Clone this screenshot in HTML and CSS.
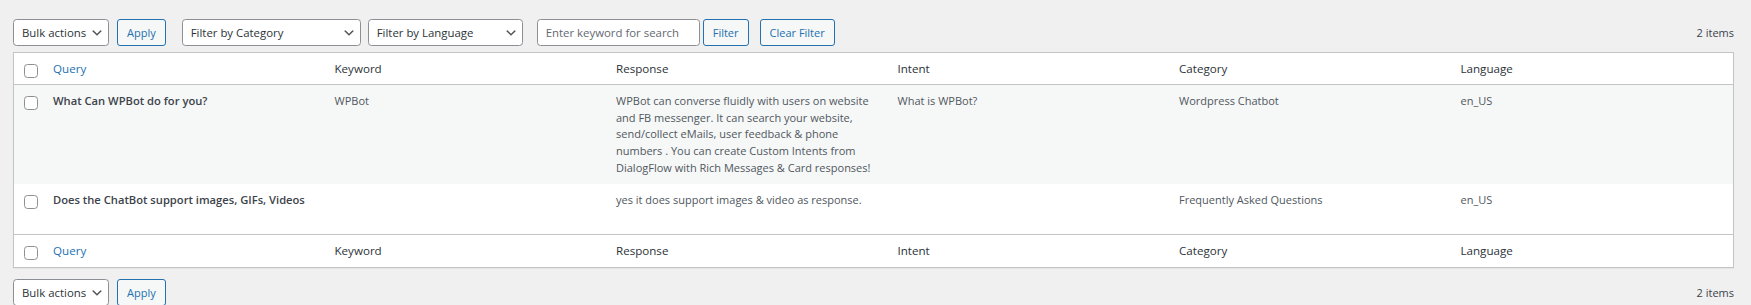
FILE: index.html
```html
<!DOCTYPE html>
<html lang="en">
<head>
  <meta charset="UTF-8" />
  <meta name="viewport" content="width=device-width, initial-scale=1.0"/>
  <title>WPBot - Simple Text Responses</title>
  <link rel="stylesheet" href="styles.css">
</head>
<body>
  <div class="wrap">

    <!-- Top table navigation -->
    <div class="tablenav top">
      <div class="bulkactions">
        <span class="select-wrap">
          <select class="select bulk-select">
            <option>Bulk actions</option>
            <option>Delete</option>
          </select>
          <svg class="chevron" viewBox="0 0 20 20"><path d="M5 6l5 5 5-5 2 1-7 7-7-7 2-1z"/></svg>
        </span>
        <button class="button">Apply</button>
      </div>
      <div class="filters">
        <span class="select-wrap">
          <select class="select category-select">
            <option>Filter by Category</option>
            <option>Wordpress Chatbot</option>
            <option>Frequently Asked Questions</option>
          </select>
          <svg class="chevron" viewBox="0 0 20 20"><path d="M5 6l5 5 5-5 2 1-7 7-7-7 2-1z"/></svg>
        </span>
        <span class="select-wrap language">
          <select class="select language-select">
            <option>Filter by Language</option>
            <option>en_US</option>
          </select>
          <svg class="chevron" viewBox="0 0 20 20"><path d="M5 6l5 5 5-5 2 1-7 7-7-7 2-1z"/></svg>
        </span>
        <input type="text" class="search-input" placeholder="Enter keyword for search">
        <button class="button filter-btn">Filter</button>
        <button class="button clear-btn">Clear Filter</button>
      </div>
      <div class="displaying-num">2 items</div>
    </div>

    <table class="wp-list-table">
      <colgroup>
        <col class="col-check">
        <col><col><col><col><col><col>
      </colgroup>
      <thead>
        <tr>
          <th class="check-column"><input type="checkbox"></th>
          <th><a href="#">Query</a></th>
          <th>Keyword</th>
          <th>Response</th>
          <th>Intent</th>
          <th>Category</th>
          <th>Language</th>
        </tr>
      </thead>
      <tbody>
        <tr class="alternate">
          <th class="check-column"><input type="checkbox"></th>
          <td>
            <strong class="row-title">What Can WPBot do for you?</strong>
            <div class="row-actions"><span>Edit</span> | <span>Delete</span></div>
          </td>
          <td>WPBot</td>
          <td>WPBot can converse fluidly with users on website and FB messenger. It can search your website, send/collect eMails, user feedback &amp; phone numbers . You can create Custom Intents from DialogFlow with Rich Messages &amp; Card responses!</td>
          <td>What is WPBot?</td>
          <td>Wordpress Chatbot</td>
          <td>en_US</td>
        </tr>
        <tr>
          <th class="check-column"><input type="checkbox"></th>
          <td>
            <strong class="row-title">Does the ChatBot support images, GIFs, Videos</strong>
            <div class="row-actions"><span>Edit</span> | <span>Delete</span></div>
          </td>
          <td></td>
          <td>yes it does support images &amp; video as response.</td>
          <td></td>
          <td>Frequently Asked Questions</td>
          <td>en_US</td>
        </tr>
      </tbody>
      <tfoot>
        <tr>
          <th class="check-column"><input type="checkbox"></th>
          <th><a href="#">Query</a></th>
          <th>Keyword</th>
          <th>Response</th>
          <th>Intent</th>
          <th>Category</th>
          <th>Language</th>
        </tr>
      </tfoot>
    </table>

    <!-- Bottom table navigation -->
    <div class="tablenav bottom">
      <div class="bulkactions">
        <span class="select-wrap">
          <select class="select bulk-select">
            <option>Bulk actions</option>
            <option>Delete</option>
          </select>
          <svg class="chevron" viewBox="0 0 20 20"><path d="M5 6l5 5 5-5 2 1-7 7-7-7 2-1z"/></svg>
        </span>
        <button class="button">Apply</button>
      </div>
      <div class="displaying-num">2 items</div>
    </div>

  </div>
</body>
</html>
```

FILE: styles.css
```css
body {
  margin: 0;
  background: #f0f0f1;
  color: #3c434a;
  font-family: "Open Sans", Arial, sans-serif;
  font-size: 11px;
}

.wrap {
  padding: 0 17px 0 13px;
}

/* table navigation bars */
.tablenav {
  display: flex;
  align-items: center;
  height: 27px;
}

.tablenav.top {
  padding-top: 19px;
  margin-bottom: 6px;
}

.tablenav.bottom {
  padding-top: 11px;
}

.bulkactions,
.filters {
  display: flex;
  align-items: center;
}

.bulkactions .button {
  margin-left: 8px;
}

.filters {
  margin-left: 16px;
}

.filters .language {
  margin-left: 7px;
}

.displaying-num {
  margin-left: auto;
  color: #3c434a;
  font-size: 11px;
}

/* selects */
.select-wrap {
  position: relative;
  display: inline-block;
}

.select {
  -webkit-appearance: none;
  appearance: none;
  display: block;
  height: 27px;
  padding: 0 14px 0 8px;
  border: 1px solid #8c8f94;
  border-radius: 3.5px;
  background: #fff;
  color: #2c3338;
  font-family: "Open Sans", Arial, sans-serif;
  font-size: 11.4px;
}

.bulk-select { width: 96px; }
.category-select { width: 179px; }
.language-select { width: 155px; }

.chevron {
  position: absolute;
  right: 5px;
  top: 7px;
  width: 14px;
  height: 14px;
  fill: #555;
  pointer-events: none;
}

.search-input {
  box-sizing: border-box;
  width: 163px;
  height: 27px;
  margin-left: 14px;
  padding: 0 8px;
  border: 1px solid #8c8f94;
  border-radius: 3.5px;
  background: #fff;
  color: #2c3338;
  font-family: "Open Sans", Arial, sans-serif;
  font-size: 11.4px;
}

.search-input::placeholder {
  color: #646970;
}

/* buttons */
.button {
  height: 27px;
  padding: 0 9px;
  border: 1px solid #2271b1;
  border-radius: 3px;
  background: #f6f7f7;
  color: #2271b1;
  font-family: "Open Sans", Arial, sans-serif;
  font-size: 11px;
  cursor: pointer;
}

.filter-btn { margin-left: 3px; }
.clear-btn { margin-left: 11px; }

/* list table */
.wp-list-table {
  width: 100%;
  table-layout: fixed;
  border-collapse: separate;
  border-spacing: 0;
  background: #fff;
  border: 1px solid #c3c4c7;
  box-shadow: 0 1px 1px rgba(0,0,0,0.04);
}

.col-check {
  width: 30px;
}

.wp-list-table th,
.wp-list-table td {
  text-align: left;
  vertical-align: top;
}

.wp-list-table thead th,
.wp-list-table tfoot th {
  padding: 7px 9px;
  line-height: 17px;
  font-size: 11.6px;
  font-weight: normal;
  color: #2c3338;
}

.wp-list-table thead th {
  border-bottom: 1px solid #c3c4c7;
}

.wp-list-table tfoot th {
  padding-bottom: 8px;
  border-top: 1px solid #c3c4c7;
}

.wp-list-table th a {
  color: #2271b1;
  text-decoration: none;
}

.wp-list-table tbody td {
  padding: 8px 9px;
  line-height: 16.67px;
  font-size: 11px;
  color: #50575e;
}

.wp-list-table tr.alternate {
  background: #f6f7f7;
}

.wp-list-table .check-column,
.wp-list-table thead .check-column,
.wp-list-table tfoot .check-column {
  padding: 11px 0 0;
}

.check-column input {
  -webkit-appearance: none;
  appearance: none;
  display: block;
  width: 14px;
  height: 14px;
  margin: 0 0 0 10px;
  border: 1px solid #8c8f94;
  border-radius: 3.5px;
  background: #fff;
}

.row-title {
  font-size: 11.2px;
  font-weight: 600;
  color: #3c434a;
}

.row-actions {
  visibility: hidden;
  color: #2271b1;
}
```
